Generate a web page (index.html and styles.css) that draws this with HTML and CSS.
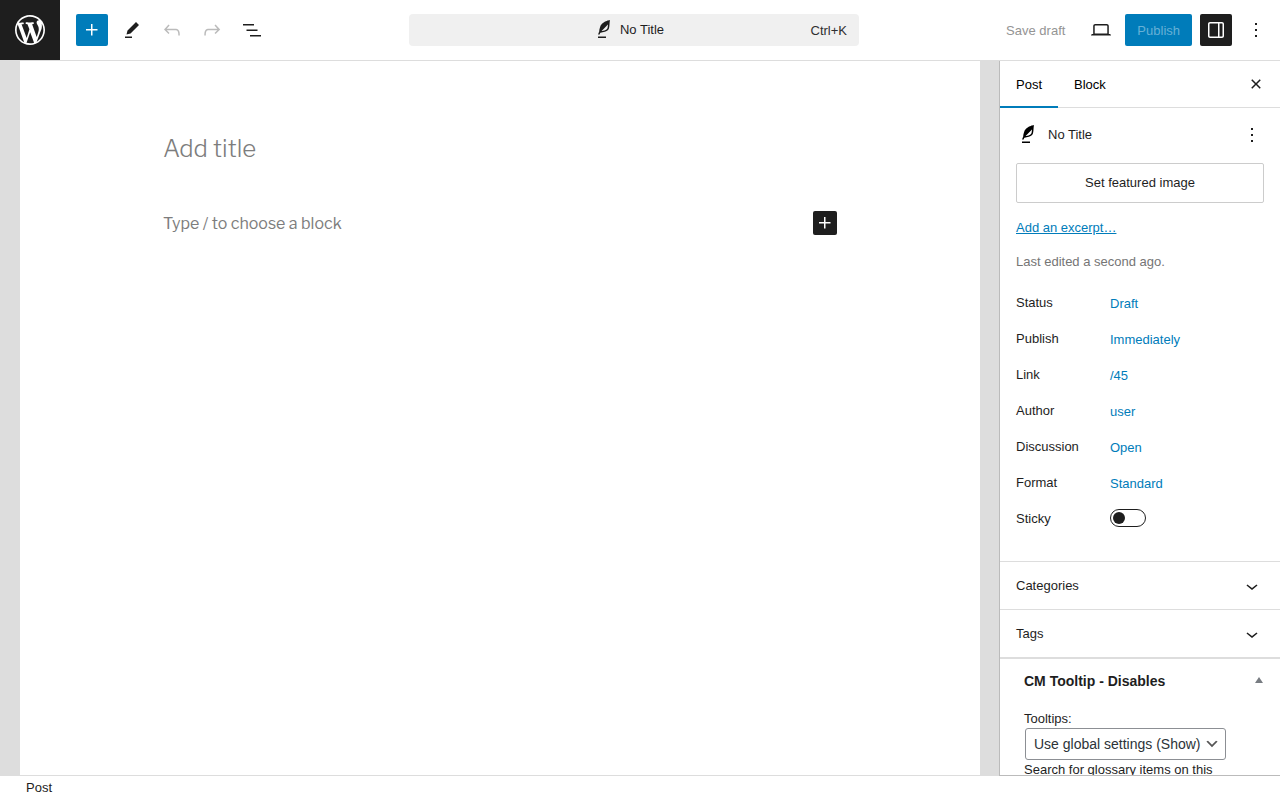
FILE: index.html
```html
<!DOCTYPE html>
<html lang="en">
<head>
    <meta charset="UTF-8">
    <meta name="viewport" content="width=device-width, initial-scale=1.0">
    <title>Add New Post</title>
    <link rel="stylesheet" href="styles.css">
</head>
<body>
    <svg class="icon-defs" aria-hidden="true">
        <symbol id="icon-plus" viewBox="0 0 24 24"><path d="M11 12.5V17.5H12.5V12.5H17.5V11H12.5V6H11V11H6V12.5H11Z"/></symbol>
        <symbol id="icon-post" viewBox="0 0 24 24"><path d="M17.8 2l-.9.3c-.1 0-3.6 1-5.2 2.1C10 5.5 9.3 6.5 8.9 7.1c-.6.9-1.7 4.7-1.7 6.3l-.9 2.3c-.2.4 0 .8.4 1 .1 0 .2.1.3.1.3 0 .6-.2.7-.5l.6-1.5c.3 0 .7-.1 1.2-.2.7-.1 1.4-.3 2.2-.5.8-.2 1.6-.5 2.4-.8.7-.3 1.4-.7 1.9-1.2s.8-1.2 1-1.9c.2-.7.3-1.6.4-2.4.1-.8.1-1.7.2-2.5 0-.8.1-1.5.2-2.1V2zm-1.9 5.6c-.1.8-.2 1.5-.3 2.1-.2.6-.4 1-.6 1.3-.3.3-.8.6-1.4.9-.7.3-1.4.5-2.2.8-.6.2-1.3.3-1.8.4L15 7.5c.3-.3.6-.7 1-1.1 0 .4 0 .8-.1 1.2zM6 20h8v-1.5H6V20z"/></symbol>
        <symbol id="icon-more" viewBox="0 0 24 24"><path d="M13 19h-2v-2h2v2zm0-6h-2v-2h2v2zm0-6h-2V5h2v2z"/></symbol>
        <symbol id="icon-chevron" viewBox="0 0 24 24"><path d="M17.5 11.6L12 16l-5.5-4.4.9-1.2L12 14l4.5-3.6 1 1.2z"/></symbol>
    </svg>

    <header class="header">
        <div class="header-left">
            <a class="logo" href="#" aria-label="View Posts">
                <svg viewBox="-2 -2 24 24"><path d="M20 10c0-5.51-4.49-10-10-10C4.48 0 0 4.49 0 10c0 5.52 4.48 10 10 10 5.51 0 10-4.48 10-10zM7.78 15.37L4.37 6.22c.55-.02 1.17-.08 1.17-.08.5-.06.44-1.13-.06-1.11 0 0-1.45.11-2.37.11-.18 0-.37 0-.58-.01C4.12 2.69 6.87 1.11 10 1.11c2.33 0 4.45.87 6.05 2.34-.68-.11-1.65.39-1.65 1.58 0 .74.45 1.36.9 2.1.35.61.55 1.36.55 2.46 0 1.49-1.4 5-1.4 5l-3.03-8.37c.54-.02.82-.17.82-.17.5-.05.44-1.25-.06-1.22 0 0-1.44.12-2.38.12-.87 0-2.33-.12-2.33-.12-.5-.03-.56 1.2-.06 1.22l.92.08 1.26 3.41zM17.41 10c.24-.64.74-1.87.43-4.25.7 1.29 1.05 2.71 1.05 4.25 0 3.29-1.73 6.24-4.4 7.78.97-2.59 1.94-5.2 2.92-7.78zM6.1 18.09C3.12 16.65 1.11 13.53 1.11 10c0-1.3.23-2.48.72-3.59C3.25 10.3 4.67 14.2 6.1 18.09zm4.03-6.63l2.58 6.98c-.86.29-1.76.45-2.71.45-.79 0-1.57-.11-2.29-.33.81-2.38 1.62-4.74 2.42-7.1z"/></svg>
            </a>
            <div class="toolbar">
                <button type="button" class="icon-button primary" aria-label="Toggle block inserter"><svg><use href="#icon-plus"/></svg></button>
                <button type="button" class="icon-button" aria-label="Tools"><svg viewBox="0 0 24 24"><path d="m19 7-3-3-8.5 8.5-1 4 4-1L19 7Zm-7 11.5H5V20h7v-1.5Z"/></svg></button>
                <button type="button" class="icon-button" aria-label="Undo" disabled><svg viewBox="0 0 24 24"><path d="M18.3 11.7c-.6-.6-1.4-.9-2.3-.9H6.7l2.9-3.3-1.1-1-4.5 5L8.5 16l1-1-2.7-2.7H16c.5 0 .9.2 1.3.5 1 1 1 3.4 1 4.5v.3h1.5v-.2c0-1.5 0-4.3-1.5-5.7z"/></svg></button>
                <button type="button" class="icon-button" aria-label="Redo" disabled><svg viewBox="0 0 24 24"><path d="M15.6 6.5l-1.1 1 2.9 3.3H8c-.9 0-1.7.3-2.3.9-1.4 1.5-1.4 4.2-1.4 5.6v.2h1.5v-.3c0-1.1 0-3.5 1-4.5.3-.3.7-.5 1.3-.5h9.2L14.5 15l1.1 1.1 4.6-4.6-4.6-5z"/></svg></button>
                <button type="button" class="icon-button" aria-label="Document Overview"><svg viewBox="0 0 24 24"><path d="M3 6h11v1.5H3V6Zm3.5 5.5h11V13h-11v-1.5ZM21 17H10v1.5h11V17Z"/></svg></button>
            </div>
        </div>
        <button type="button" class="document-bar">
            <span class="document-title"><svg><use href="#icon-post"/></svg>No Title</span>
            <span class="shortcut">Ctrl+K</span>
        </button>
        <div class="header-right">
            <button type="button" class="text-button" disabled>Save draft</button>
            <button type="button" class="icon-button" aria-label="View"><svg viewBox="0 0 24 24"><path d="M20.5 16h-.7V8c0-1.1-.9-2-2-2H6.2c-1.1 0-2 .9-2 2v8h-.7c-.8 0-1.5.7-1.5 1.5h20c0-.8-.7-1.5-1.5-1.5zM5.7 8c0-.3.2-.5.5-.5h11.6c.3 0 .5.2.5.5v7.6H5.7V8z"/></svg></button>
            <button type="button" class="text-button publish">Publish</button>
            <button type="button" class="icon-button pressed" aria-label="Settings"><svg viewBox="0 0 24 24"><path d="M18 4H6c-1.1 0-2 .9-2 2v12c0 1.1.9 2 2 2h12c1.1 0 2-.9 2-2V6c0-1.1-.9-2-2-2zm-4 14.5H6c-.3 0-.5-.2-.5-.5V6c0-.3.2-.5.5-.5h8v13zm4.5-.5c0 .3-.2.5-.5.5h-2.5v-13H18c.3 0 .5.2.5.5v12z"/></svg></button>
            <button type="button" class="icon-button" aria-label="Options"><svg><use href="#icon-more"/></svg></button>
        </div>
    </header>

    <div class="body">
        <main class="canvas">
            <div class="page">
                <div class="content">
                    <input type="text" class="post-title" placeholder="Add title" aria-label="Add title">
                    <div class="block-row">
                        <input type="text" class="paragraph" placeholder="Type / to choose a block" aria-label="Add default block">
                        <button type="button" class="inserter" aria-label="Add block"><svg><use href="#icon-plus"/></svg></button>
                    </div>
                </div>
            </div>
        </main>

        <aside class="sidebar">
            <div class="tabs">
                <button type="button" class="tab active">Post</button>
                <button type="button" class="tab">Block</button>
                <button type="button" class="icon-button close" aria-label="Close Settings"><svg viewBox="0 0 24 24"><path d="M12 13.06l3.712 3.713 1.061-1.06L13.061 12l3.712-3.712-1.06-1.06L12 10.938 8.288 7.227l-1.061 1.06L10.939 12l-3.712 3.712 1.06 1.061L12 13.061z"/></svg></button>
            </div>

            <section class="summary">
                <div class="card">
                    <svg><use href="#icon-post"/></svg>
                    <h2>No Title</h2>
                    <button type="button" class="card-more" aria-label="Actions"><svg><use href="#icon-more"/></svg></button>
                </div>
                <button type="button" class="featured">Set featured image</button>
                <a class="excerpt" href="#">Add an excerpt…</a>
                <p class="edited">Last edited a second ago.</p>
                <div class="rows">
                    <div class="row"><span>Status</span><button type="button">Draft</button></div>
                    <div class="row"><span>Publish</span><button type="button">Immediately</button></div>
                    <div class="row"><span>Link</span><button type="button">/45</button></div>
                    <div class="row"><span>Author</span><button type="button">user</button></div>
                    <div class="row"><span>Discussion</span><button type="button">Open</button></div>
                    <div class="row"><span>Format</span><button type="button">Standard</button></div>
                    <div class="row"><label for="sticky">Sticky</label><input type="checkbox" id="sticky" class="toggle"></div>
                </div>
            </section>

            <button type="button" class="panel">Categories<svg><use href="#icon-chevron"/></svg></button>
            <button type="button" class="panel">Tags<svg><use href="#icon-chevron"/></svg></button>

            <section class="metabox">
                <div class="metabox-header">
                    <h2>CM Tooltip - Disables</h2>
                    <button type="button" class="metabox-toggle" aria-label="Toggle panel"><svg viewBox="0 0 8 6"><path d="M4 0l4 6H0z"/></svg></button>
                </div>
                <div class="metabox-content">
                    <label for="tooltips">Tooltips:</label>
                    <div class="select-wrap">
                        <select id="tooltips">
                            <option>Use global settings (Show)</option>
                        </select>
                        <svg class="select-arrow" viewBox="0 0 20 20"><path d="M5 6l5 5 5-5 2 1-7 7-7-7 2-1z"/></svg>
                    </div>
                    <p>Search for glossary items on this</p>
                </div>
            </section>
        </aside>
    </div>

    <footer class="footer">Post</footer>
</body>
</html>
```
FILE: styles.css
```css
* {
    box-sizing: border-box;
}
body {
    margin: 0;
    height: 100vh;
    display: flex;
    flex-direction: column;
    font-family: "Liberation Sans", Arial, sans-serif;
    font-size: 13px;
    line-height: 18px;
    color: #1e1e1e;
    background: #fff;
}
button {
    font: inherit;
    color: inherit;
    background: none;
    border: none;
    border-radius: 2px;
    padding: 0;
    cursor: pointer;
}
svg {
    display: block;
    flex: none;
    width: 24px;
    height: 24px;
    fill: currentColor;
}
h2, p {
    margin: 0;
}
.icon-defs {
    display: none;
}

/* header */
.header {
    display: flex;
    align-items: center;
    flex: none;
    height: 61px;
    padding-right: 8px;
    border-bottom: 1px solid #ddd;
}
.header-left, .header-right {
    display: flex;
    align-items: center;
    flex: 1 1 0;
}
.header-right {
    justify-content: flex-end;
    gap: 8px;
}
.logo {
    display: flex;
    align-items: center;
    justify-content: center;
    width: 60px;
    height: 60px;
    color: #fff;
    background: #1e1e1e;
}
.logo svg {
    width: 36px;
    height: 36px;
}
.toolbar {
    display: flex;
    gap: 8px;
    margin-left: 16px;
}
.icon-button {
    display: flex;
    align-items: center;
    justify-content: center;
    width: 32px;
    height: 32px;
}
.icon-button:disabled {
    color: #bbb;
}
.primary {
    color: #fff;
    background: #007cba;
}
.pressed {
    color: #fff;
    background: #1e1e1e;
}
.document-bar {
    display: grid;
    grid-template-columns: 1fr auto 1fr;
    align-items: center;
    width: 450px;
    height: 32px;
    margin-right: 4px;
    padding: 0 12px;
    border-radius: 4px;
    background: #f0f0f0;
}
.document-title {
    grid-column: 2;
    display: flex;
    align-items: center;
    gap: 4px;
    padding-right: 12px;
}
.shortcut {
    padding-top: 2px;
    text-align: right;
    color: #2f2f2f;
}
.text-button {
    height: 32px;
    padding: 2px 12px 0;
    color: #949494;
}
.publish {
    color: #66b0d6;
    background: #007cba;
}

/* editor */
.body {
    display: flex;
    flex: 1;
    min-height: 0;
}
.canvas {
    flex: 1;
    padding: 0 19px 0 20px;
    background: #ddd;
}
.page {
    height: 100%;
    padding: 67px 24px 0;
    background: #fff;
}
.content {
    max-width: 674px;
    margin: 0 auto;
}
.post-title, .paragraph {
    display: block;
    width: 100%;
    padding: 0;
    border: none;
    outline: none;
    background: none;
    font-family: "Libre Franklin", Inter, sans-serif;
}
.post-title {
    height: 40px;
    font-size: 24px;
    font-weight: 300;
}
.paragraph {
    height: 28px;
    font-size: 16px;
}
.post-title::placeholder, .paragraph::placeholder {
    color: #7d7d7d;
}
.block-row {
    display: flex;
    align-items: center;
    margin-top: 41px;
}
.inserter {
    flex: none;
    color: #fff;
    background: #1e1e1e;
}

/* sidebar */
.sidebar {
    position: relative;
    flex: none;
    width: 281px;
    margin-bottom: -1px;
    overflow: hidden;
    border-left: 1px solid #bbb;
    border-bottom: 1px solid #bbb;
    background: #fff;
}
.tabs {
    display: flex;
    height: 47px;
    border-bottom: 1px solid #ddd;
}
.tab {
    height: 47px;
    padding: 0 16px;
    border-radius: 0;
    color: #000;
}
.tab.active {
    box-shadow: inset 0 -2px 0 #007cba;
}
.close {
    align-self: center;
    margin: 0 8px 0 auto;
}
.summary {
    display: flex;
    flex-direction: column;
    align-items: flex-start;
    gap: 16px;
    padding: 15px 16px 26px;
}
.card {
    display: flex;
    align-items: center;
    align-self: stretch;
    gap: 8px;
}
.card > svg {
    color: #000;
}
.card h2 {
    flex: 1;
    font-size: 13px;
    font-weight: 400;
}
.featured {
    align-self: stretch;
    height: 40px;
    border: 1px solid #ccc;
}
.excerpt {
    color: #007cba;
}
.edited {
    color: #757575;
}
.rows {
    display: grid;
    gap: 4px;
    align-self: stretch;
}
.row {
    display: grid;
    grid-template-columns: 94px 1fr;
    align-items: center;
    justify-items: start;
    height: 32px;
}
.row button {
    height: 32px;
    padding-top: 2px;
    color: #007cba;
}
.toggle {
    appearance: none;
    width: 36px;
    height: 18px;
    margin: 0 0 2px;
    padding: 2px;
    border: 1px solid #1e1e1e;
    border-radius: 9px;
}
.toggle::before {
    content: "";
    display: block;
    width: 12px;
    height: 12px;
    border-radius: 50%;
    background: #1e1e1e;
}
.toggle:checked::before {
    margin-left: auto;
}
.panel {
    display: flex;
    align-items: center;
    justify-content: space-between;
    width: 100%;
    height: 48px;
    padding: 0 16px;
    border-top: 1px solid #ddd;
    border-radius: 0;
}
.metabox {
    border-top: 2px solid #ddd;
}
.metabox-header {
    display: flex;
    align-items: center;
    justify-content: space-between;
    height: 44px;
    padding: 0 17px 0 24px;
}
.metabox-header h2 {
    font-size: 14px;
}
.metabox-toggle {
    padding-bottom: 2px;
}
.metabox-toggle svg {
    width: 8px;
    height: 6px;
    fill: #787c82;
}
.metabox-content {
    padding: 7px 24px 24px;
}
.metabox-content label {
    display: block;
}
.metabox-content p {
    line-height: 20px;
}
.select-wrap {
    position: relative;
    width: max-content;
    margin-left: 1px;
}
.select-wrap select {
    display: block;
    appearance: none;
    height: 32px;
    padding: 0 24px 0 8px;
    border: 1px solid #8c8f94;
    border-radius: 3px;
    font: inherit;
    font-size: 14px;
    color: #2c3338;
    background: #fff;
}
.select-arrow {
    position: absolute;
    top: 8px;
    right: 6px;
    width: 16px;
    height: 16px;
    fill: #555;
    pointer-events: none;
}

.footer {
    flex: none;
    height: 25px;
    padding: 3px 26px;
    border-top: 1px solid #ddd;
}
```
